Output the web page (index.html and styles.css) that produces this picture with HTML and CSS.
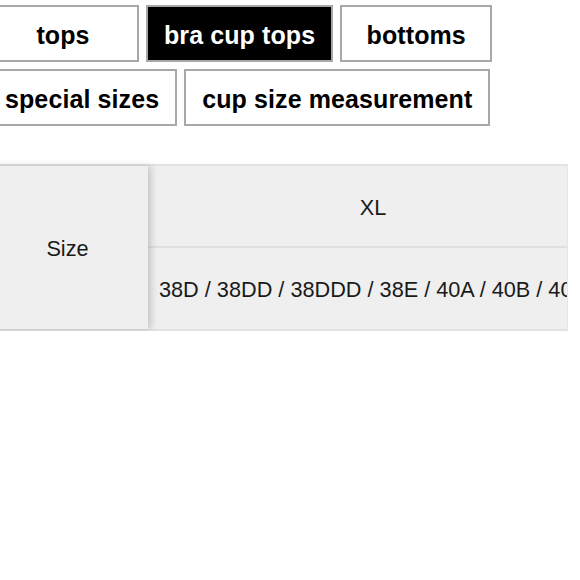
FILE: index.html
```html
<!DOCTYPE html>
<html>
<head>
<meta charset="utf-8">
<link rel="stylesheet" href="styles.css">
</head>
<body>
<nav class="tabs">
  <a class="tab">tops</a>
  <a class="tab active">bra cup tops</a>
  <a class="tab">bottoms</a>
  <a class="tab">special sizes</a>
  <a class="tab">cup size measurement</a>
</nav>
<div class="size-table">
  <div class="fixed-col">
    <div class="head-cell">Size</div>
  </div>
  <div class="scroll-area">
    <div class="row row-top"><div class="cell cell-center">XL</div></div>
    <div class="row"><div class="cell">38D / 38DD / 38DDD / 38E / 40A / 40B / 40C / 40D</div></div>
  </div>
</div>
</body>
</html>
```
FILE: styles.css
```css
html, body {
  margin: 0;
  padding: 0;
  background: #ffffff;
  font-family: "Liberation Sans", Arial, sans-serif;
  color: #111;
  overflow: hidden;
}
.tabs {
  display: flex;
  flex-wrap: wrap;
  gap: 7px;
  width: 512px;
  margin-left: -13px;
  padding-top: 5px;
}
.tab {
  box-sizing: border-box;
  display: flex;
  align-items: center;
  justify-content: center;
  min-width: 152px;
  height: 57px;
  padding: 3px 16px 0;
  border: 2px solid #a8a8a8;
  background: #fff;
  color: #000;
  font-weight: bold;
  font-size: 25px;
  letter-spacing: 0.1px;
  white-space: nowrap;
}
.tab.active {
  background: #000;
  color: #fff;
}
.size-table {
  display: flex;
  margin-top: 38px;
  margin-left: -13px;
  width: 581px;
  height: 167px;
  background: #efefef;
  border-top: 2px solid #e2e2e2;
  border-bottom: 2px solid #e2e2e2;
  box-sizing: border-box;
  font-size: 21.7px;
  color: #1a1a1a;
}
.fixed-col {
  width: 161px;
  flex: none;
  display: flex;
  align-items: center;
  justify-content: center;
  position: relative;
  z-index: 1;
  box-shadow: 3px 0 7px rgba(0, 0, 0, 0.18);
  background: #efefef;
  padding-top: 3px;
  box-sizing: border-box;
}
.scroll-area {
  flex: 1;
  overflow: hidden;
  border-right: 1px solid #e6e6e6;
}
.row {
  height: 80px;
  display: flex;
  align-items: center;
  padding-top: 3px;
  box-sizing: border-box;
}
.row-top {
  height: 82px;
  border-bottom: 2px solid #e0e0e0;
}
.cell {
  width: 450px;
  flex: none;
  padding-left: 11px;
  box-sizing: border-box;
  white-space: nowrap;
}
.cell-center {
  text-align: center;
  padding-left: 0;
}
```
